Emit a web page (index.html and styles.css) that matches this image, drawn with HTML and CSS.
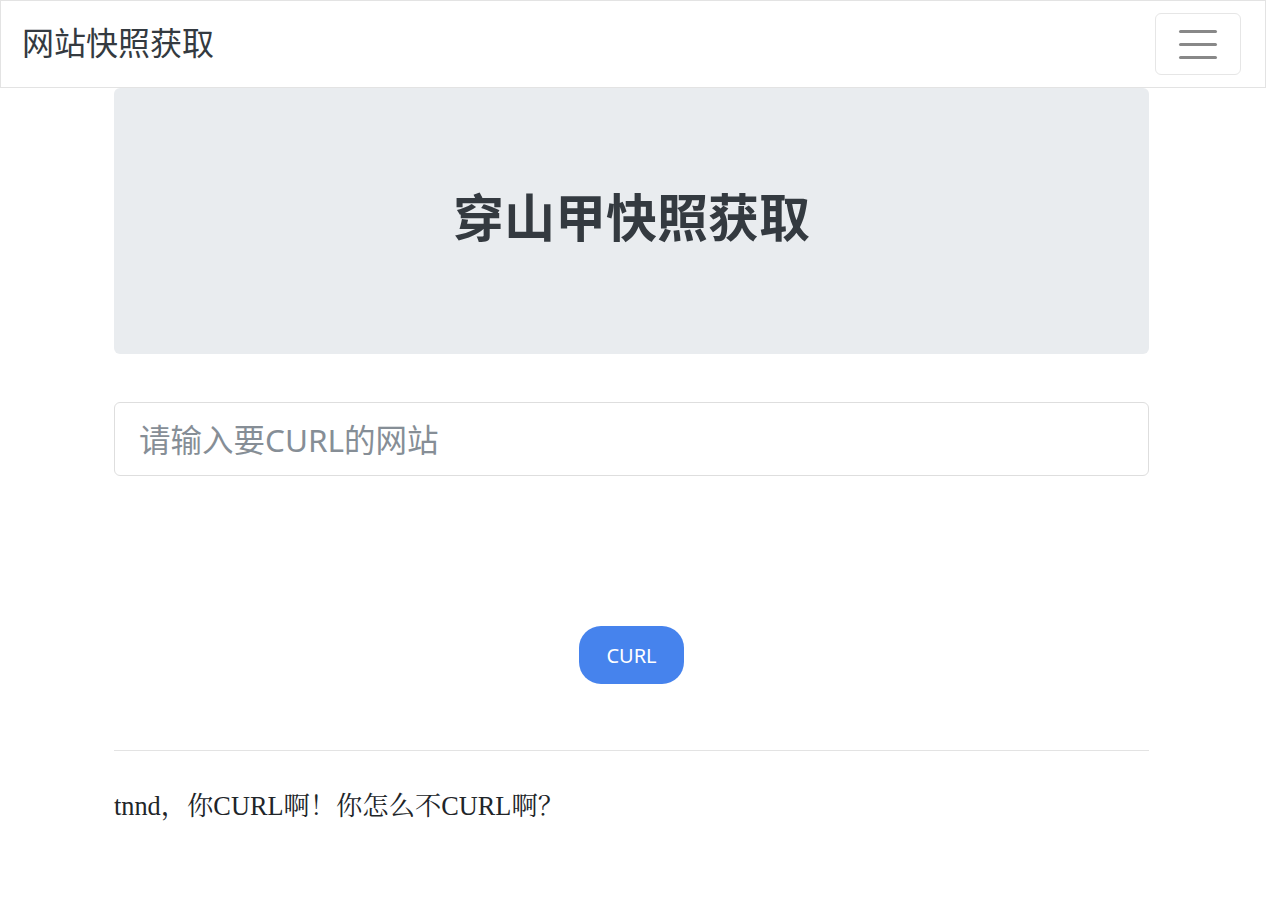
FILE: index.html
```html
<!DOCTYPE html>
<html lang="zh-CN">
    <head>
        <meta charset="UTF-8">
        <meta name="viewport" content="width=device-width, initial-scale=1.0">
        <title>网站快照获取</title>
        <link rel="stylesheet" href="styles.css">
</head>
<body>
    <nav class="navbar">
        <a class="brand" href="#">网站快照获取</a>
        <button class="toggler" type="button">
            <span class="bar"></span>
            <span class="bar"></span>
            <span class="bar"></span>
        </button>
    </nav>
    <div class="container">
        <div class="jumbotron">
            <h1>穿山甲快照获取</h1>
        </div>
        <form class="curl-form" onsubmit="return false">
            <input type="text" class="url-input" placeholder="请输入要CURL的网站">
            <div class="actions">
                <button class="curl-btn" type="submit">CURL</button>
            </div>
        </form>
        <hr>
        <p class="footer-text">tnnd，你CURL啊！你怎么不CURL啊？</p>
    </div>
</body></html>
```

FILE: styles.css
```css
:root
        {
            --fg: #343a40;
            --text: #212529;
            --line: #e3e3e3;
            --jumbo: #e9ecef;
            --blue: #4683ed;
        }

        * {
            margin: 0;
            padding: 0;
            box-sizing: border-box;
        }

        body {
            background-color: #fff;
            color: var(--text);
            font-family: "Noto Sans", "Noto Sans CJK SC", sans-serif;
        }

        .navbar {
            height: 88px;
            border: 1px solid var(--line);
            display: flex;
            justify-content: space-between;
            align-items: center;
            padding: 0 24px 0 21px;
        }

        .brand {
            font-size: 32px;
            color: var(--fg);
            text-decoration: none;
            line-height: 1;
            padding-bottom: 2px;
        }

        .toggler {
            width: 86px;
            height: 62px;
            border: 1px solid #e6e6e6;
            border-radius: 6px;
            background: none;
            display: flex;
            flex-direction: column;
            justify-content: center;
            align-items: center;
            gap: 10px;
            cursor: pointer;
        }

        .bar {
            display: block;
            width: 38px;
            height: 3px;
            border-radius: 2px;
            background-color: #888;
        }

        .container {
            width: 1035px;
            margin-left: 114px;
        }

        .jumbotron {
            height: 266px;
            background-color: var(--jumbo);
            border-radius: 6px;
            display: flex;
            justify-content: center;
            align-items: center;
            margin-bottom: 48px;
        }

        .jumbotron h1 {
            font-size: 51px;
            font-weight: 700;
            color: var(--fg);
            line-height: 1.2;
            padding-bottom: 6px;
        }

        .url-input {
            width: 100%;
            height: 74px;
            border: 1px solid #dedede;
            border-radius: 6px;
            padding: 0 24px;
            font-size: 31.5px;
            font-family: "Noto Sans", "Noto Sans CJK SC", sans-serif;
            color: var(--text);
            outline: none;
        }

        .url-input::placeholder {
            color: #868e96;
        }

        .actions {
            display: flex;
            justify-content: center;
            padding-top: 150px;
        }

        .curl-btn {
            height: 58px;
            padding: 0 27px;
            border: none;
            border-radius: 22px;
            background-color: var(--blue);
            color: #fff;
            font-size: 20px;
            font-family: "Noto Sans", "Noto Sans CJK SC", sans-serif;
            cursor: pointer;
        }

        .curl-btn:hover {
            filter: brightness(110%);
        }

        hr {
            border: none;
            border-top: 1px solid var(--line);
            margin: 66px 0 0;
        }

        .footer-text {
            font-family: "Liberation Serif", "Noto Serif CJK SC", serif;
            font-size: 26.3px;
            margin-top: 34px;
            color: var(--text);
        }
```
